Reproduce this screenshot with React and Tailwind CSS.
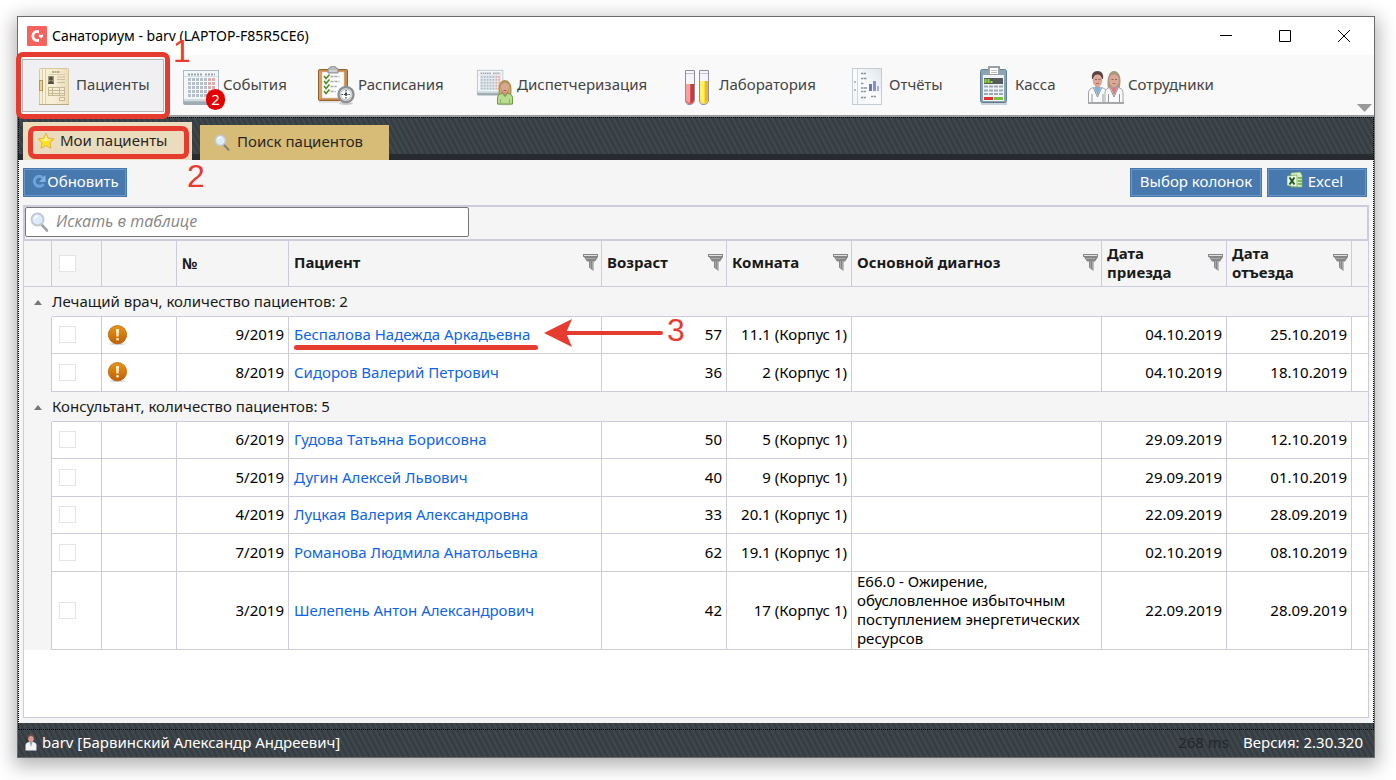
import React from "react";

const hatch =
  "bg-[repeating-linear-gradient(62deg,#363d42_0px,#363d42_1px,#434a4f_3px,#363d42_5px)]";

/* ---------- toolbar drawings ---------- */

function PatientsIcon() {
  return (
    <svg viewBox="0 0 40 40" className="size-10 shrink-0" aria-hidden="true">
      <defs>
        <linearGradient id="book" x1="0" x2="1">
          <stop offset="0" stopColor="#f8efcf" />
          <stop offset=".5" stopColor="#f7eed6" />
          <stop offset="1" stopColor="#eadcb6" />
        </linearGradient>
      </defs>
      <rect x="5.500" y="2.500" width="29" height="36" rx="1" fill="url(#book)" stroke="#d8c8a0" />
      <path d="M5 38.500h30" stroke="#bba982" />
      <path d="M8.500 3v35M11.500 3v35" stroke="#dccda6" />
      <path d="M10 3v35" stroke="#fffbe8" />
      <rect x="5.500" y="14.500" width="3" height="10" fill="#e9d29a" stroke="#b9974f" />
      <path d="M18 6h8" stroke="#b9ac8c" strokeWidth="2" strokeDasharray="2 .5" />
      <path d="M15 8.500h16" stroke="#d9cdae" />
      <rect x="14" y="10" width="6" height="8" fill="#a0967c" />
      <circle cx="17" cy="12.500" r="2" fill="#575042" />
      <path d="M14 18c0-4 6-4 6 0z" fill="#575042" />
      <path d="M23 11h8M23 13.500h8M23 16.500h8" stroke="#cbbf9f" />
      <rect x="14.500" y="21.500" width="16" height="8" fill="#f6ecd2" stroke="#c6b997" />
      <path d="M14 24.500h17M14 27.500h17M18.500 21v9M25.500 21v9" stroke="#c6b997" />
      <rect x="25.500" y="31.500" width="5" height="3" fill="#f6edd0" stroke="#c6b997" />
    </svg>
  );
}

function CalendarShape() {
  return (
    <g>
      <path d="M2 34h36v3q0 2-2 2H4q-2 0-2-2z" fill="#9fabb2" />
      <rect x="2.500" y="4.500" width="35" height="31" fill="#f4f7f9" stroke="#aebac2" />
      <path d="M3 33h34v2H3z" fill="#cfdbe2" />
      <path d="M3 10.500h34" stroke="#d5dee4" />
      <path d="M7 8.500h15M24 8.500h10" stroke="#98a3aa" strokeWidth="2" strokeDasharray="2 1" />
      <rect x="7" y="12" width="20" height="19" fill="#b4c0cb" />
      <rect x="27" y="12" width="7" height="19" fill="#dfabab" />
      <path
        d="M7 15.500h27M7 19.500h27M7 23.500h27M7 27.500h27M10.500 12v19M14.500 12v19M18.500 12v19M22.500 12v19M26.500 12v19M30.500 12v19"
        stroke="#f8fbfd"
      />
    </g>
  );
}

function EventsIcon() {
  return (
    <svg viewBox="0 0 40 40" className="size-10 shrink-0" aria-hidden="true">
      <CalendarShape />
    </svg>
  );
}

function ScheduleIcon() {
  return (
    <svg viewBox="0 0 40 40" className="size-10 shrink-0" aria-hidden="true">
      <rect x="3" y="34" width="29" height="3" fill="#e2e2e2" />
      <rect x="2.500" y="3.500" width="29" height="31" rx="1" fill="#c98a4b" stroke="#96602b" />
      <path d="M4 5v28" stroke="#e3b27c" />
      <path d="M6 6h22v20l-5 6H6z" fill="#fcfcfa" stroke="#d8cfc4" strokeWidth=".6" />
      <path d="M12 7V3q0-1 2-1 0-2 3-2t3 2q2 0 2 1v4z" fill="#b9bcbe" stroke="#8d9194" />
      <path d="M13 5h8" stroke="#e4e6e7" />
      <path
        d="M8 10l2 2.500 3.500-4M8 15l2 2.500 3.500-4M8 20l2 2.500 3.500-4M8 25l2 2.500 3.500-4"
        fill="none"
        stroke="#4a8a1c"
        strokeWidth="1.500"
      />
      <path d="M14.500 10.500h9M14.500 15.500h9M14.500 20.500h6M14.500 25.500h5" stroke="#a6a6a6" strokeWidth="1.500" strokeDasharray="3 1" />
      <ellipse cx="30" cy="37.500" rx="7" ry="1.500" fill="#c9c9c9" />
      <circle cx="30" cy="28.500" r="7.500" fill="#f1f3f4" stroke="#8b9095" strokeWidth="2.400" />
      <circle cx="30" cy="28.500" r="5.300" fill="#fff" stroke="#b4b9bd" />
      <path d="M30 24v9M25.500 28.500h9" stroke="#3d4246" strokeWidth="1.200" strokeDasharray="1.500 .8" />
      <path d="M30 27v2.500" stroke="#3d4246" strokeWidth="2" />
    </svg>
  );
}

function DispatchIcon() {
  return (
    <svg viewBox="0 0 40 40" className="size-10 shrink-0" aria-hidden="true">
      <g transform="translate(.5 1) scale(.73)">
        <CalendarShape />
      </g>
      <ellipse cx="30" cy="38" rx="8" ry="1.300" fill="#c4c9bd" />
      <path d="M24 31q-1-8 0-12 2-5 6-5t6 5q1 4 0 12z" fill="#b09257" />
      <path d="M26 28q-1-6 1-10M34 28q1-6-1-10" stroke="#d5bd85" fill="none" />
      <rect x="28" y="24" width="4" height="6" fill="#c98f7c" />
      <ellipse cx="30" cy="21.500" rx="3.600" ry="5" fill="#dba692" />
      <path d="M28.500 24.500h3" stroke="#a85a50" />
      <path d="M22.500 38v-6q0-4 5-4.500l2.500 3 2.500-3q5 .5 5 4.500v6z" fill="#b7de8e" stroke="#6f9c46" />
      <path d="M25.500 37v-4M34.500 37v-4" stroke="#8bb962" />
    </svg>
  );
}

function Tube({ x, top, dark, mid, light }) {
  return (
    <g>
      <path d={`M${x + 1} 5h8v29q0 4-4 4t-4-4z`} fill="#f5f5fb" />
      <path d={`M${x + 1} ${top}h8v${34 - top}q0 4-4 4t-4-4z`} fill={mid} />
      <path d={`M${x + 1} ${top}h4v${37 - top}q-4-1-4-4z`} fill={light} />
      <path d={`M${x + 6} ${top}h3v${34 - top}l-3 3z`} fill={dark} />
      <path d={`M${x + 0.5} 4.500h9v29.500q0 4-4.500 4.500t-4.500-4.500z`} fill="none" stroke="#8d8cab" />
      <path d={`M${x + 1} 7.500h8`} stroke="#c1c0d4" />
    </g>
  );
}

function LabIcon() {
  return (
    <svg viewBox="0 0 40 40" className="size-10 shrink-0" aria-hidden="true">
      <Tube x={8} top={18} dark="#c93b3b" mid="#e05252" light="#f3a3a0" />
      <Tube x={22} top={15} dark="#eeb91d" mid="#fbdc3a" light="#fff06a" />
    </svg>
  );
}

function ReportsIcon() {
  return (
    <svg viewBox="0 0 40 40" className="size-10 shrink-0" aria-hidden="true">
      <defs>
        <linearGradient id="page" x1="1" y1="0" x2="0" y2="1">
          <stop offset="0" stopColor="#dde5ea" />
          <stop offset=".5" stopColor="#fbfcfd" />
          <stop offset="1" stopColor="#f1f4f6" />
        </linearGradient>
      </defs>
      <rect x="5.500" y="2.500" width="29" height="36" fill="url(#page)" stroke="#c3cdd3" />
      <path d="M10.500 3v35" stroke="#cdd6db" />
      <path d="M7 16h2M7 24h2" stroke="#7b868d" />
      <path
        d="M14 7.500h5M14 12.500h6M14 17.500h3M14 22h4M18 22h2M14 25.500h5M14 31.500h5M24 30.500h5"
        stroke="#8c959b"
        strokeWidth="1.500"
        strokeDasharray="2.500 .5"
      />
      <path d="M22 18h3v7h-3z" fill="#6d77c4" />
      <path d="M26 15h3v10h-3z" fill="#8890d6" />
      <path d="M30 20h2v5h-2z" fill="#a9afe4" />
    </svg>
  );
}

function CashIcon() {
  return (
    <svg viewBox="0 0 40 40" className="size-10 shrink-0" aria-hidden="true">
      <rect x="8" y="36" width="26" height="3" fill="#c9d2d8" />
      <rect x="7.500" y="3.500" width="26" height="33" rx="2" fill="#8ba5b6" stroke="#5f7c90" />
      <path d="M10 9h21v26H10z" fill="#eef3f6" />
      <path d="M15 0h12v9H15z" fill="#9aa0a4" />
      <path d="M17 2h8v6h-8z" fill="#fff" />
      <path d="M18 4.500h6M18 6.500h6" stroke="#b8bcc0" />
      <rect x="11" y="12" width="19" height="6" fill="#565b5e" />
      <path d="M12.500 13v4M15.500 13v4M18.500 15v2" stroke="#95e032" strokeWidth="2" />
      <path d="M11 20.500h19M11 24.500h19M11 28h19" stroke="#9da8b0" strokeWidth="2" strokeDasharray="4 1" />
      <path d="M11 31h9v3h-9z" fill="#e03030" />
      <path d="M21 31h9v3h-9z" fill="#7cc23c" />
    </svg>
  );
}

function Doctor({ x, hair, shirt, woman }) {
  return (
    <g transform={`translate(${x} 0)`}>
      {woman && <path d="M3.500 23Q2 14 4.500 9 6 5 9.500 5T15 9q2 5 0 14z" fill="#a8987c" />}
      {!woman && <path d="M4 13Q3 5 9.500 5T15 13z" fill={hair} />}
      <path d="M7.500 18h4v6h-4z" fill="#c98d7d" />
      <ellipse cx="9.500" cy="14.500" rx="4.800" ry="6.500" fill="#dba897" />
      <path d="M4.500 12q0-6 5-6t5 6q-1-3.500-5-3.500T4.500 12z" fill={hair} />
      <path d="M7 13.500h2M10.500 13.500h2" stroke="#7d5248" strokeWidth=".8" />
      <path d="M8 17.500h3" stroke="#b06a60" />
      <path d="M.5 36.500V27q0-5 6-5.500h6q6 .5 6 5.500v9.500z" fill="#fafafa" stroke="#a3a6a8" />
      <path d="M6 21.500l3.500 8 3.500-8z" fill={shirt} />
      <path d="M5.500 22l4 9 4-9M4 36v-8M15 36v-8" fill="none" stroke="#909496" />
    </g>
  );
}

function StaffIcon() {
  return (
    <svg viewBox="0 0 40 40" className="size-10 shrink-0" aria-hidden="true">
      <path d="M2 36h36v2H2z" fill="#a9a9a9" />
      <Doctor x={2} hair="#5b4545" shirt="#7fb4d8" />
      <Doctor x={18.500} hair="#a8987c" shirt="#dc7c86" woman />
    </svg>
  );
}

/* ---------- small drawings ---------- */

function Magnifier({ className, tone = "#a5a5a8" }) {
  return (
    <svg viewBox="0 0 20 20" className={className} aria-hidden="true">
      <path d="M11.500 12.500l5.500 6" stroke={tone} strokeWidth="2.600" strokeLinecap="round" />
      <circle cx="7.500" cy="7.500" r="6" fill="#dcebfa" stroke="#c3c7cf" strokeWidth="1.800" />
      <path d="M4.500 7q.5-3 3.500-3" stroke="#fff" strokeWidth="1.500" fill="none" />
    </svg>
  );
}

function Star() {
  return (
    <svg viewBox="0 0 18 18" className="size-[18px]" aria-hidden="true">
      <path
        d="M9 1.200l2.400 5 5.600.7-4.100 3.900 1.200 5.500L9 13.700l-5.100 2.600 1.200-5.500L1 6.900l5.600-.7z"
        fill="#ffe11c"
        stroke="#e0b452"
        strokeLinejoin="round"
      />
      <path d="M9 3.500l1.500 3.600 3.600.5-3 1.400H7L3.900 7.600l3.600-.5z" fill="#fff3a0" />
    </svg>
  );
}

function Funnel() {
  return (
    <svg viewBox="0 0 16 18" className="h-[18px] w-4" aria-hidden="true">
      <path d="M0 0h15v3l-3 4.500h-1.500V17L6 13.500v-6H4L1 3H0z" fill="#868686" />
      <path d="M1 1.500h13" stroke="#e2e2e2" />
      <path d="M3 4.500h9" stroke="#a9a9a9" />
      <path d="M7.500 7v7M9.500 7v8.500" stroke="#b4b4b4" strokeWidth=".7" />
    </svg>
  );
}

function Warning() {
  return (
    <svg viewBox="0 0 20 20" className="block size-5" role="img" aria-label="Внимание">
      <defs>
        <linearGradient id="warn" x1="0" y1="0" x2="0" y2="1">
          <stop offset="0" stopColor="#e8960f" />
          <stop offset="1" stopColor="#bd5f0c" />
        </linearGradient>
      </defs>
      <ellipse cx="10.500" cy="19" rx="8" ry="1" fill="#d8d8d8" />
      <circle cx="10.500" cy="9.700" r="9.200" fill="url(#warn)" stroke="#b96a12" strokeWidth=".8" />
      <path d="M9 4h3l-.5 7.500h-2z" fill="#fff3dc" />
      <rect x="9.200" y="13" width="2.600" height="2.500" rx="1" fill="#fff3dc" />
    </svg>
  );
}

function Refresh() {
  return (
    <svg viewBox="0 0 16 16" className="size-4" aria-hidden="true">
      <path d="M12 4A5 5 0 1 0 12.500 10" fill="none" stroke="#6ea4dc" strokeWidth="3" />
      <path d="M14.500 1v7H8z" fill="#84b3e6" />
    </svg>
  );
}

function ExcelMark() {
  return (
    <svg viewBox="0 0 16 16" className="mb-1 size-4" aria-hidden="true">
      <path d="M4 1l9-1 2 3v12H4z" fill="#d9efc9" stroke="#7eb35c" strokeWidth=".7" />
      <path d="M11 5h4v2h-4zM11 8h4v2h-4zM11 11h4v2h-4z" fill="#7dbb58" />
      <path d="M0 4l10-1v12L0 13.500z" fill="#eef6e6" stroke="#69a04a" strokeWidth=".7" />
      <path d="M2.500 5.500l5 7M7.500 5.500l-5 7" stroke="#1f5a20" strokeWidth="2" />
    </svg>
  );
}

function UserMark() {
  return (
    <svg viewBox="0 0 12 17" className="h-[17px] w-3" aria-hidden="true">
      <path d="M.5 16.500v-5Q.5 8.500 4 8h4q3.500.5 3.500 3.500v5z" fill="#f3f3f3" />
      <path d="M4.500 8L6 13l1.500-5z" fill="#7ea8c8" />
      <ellipse cx="6" cy="4.500" rx="2.800" ry="4" fill="#d59c8d" />
      <path d="M3 4Q3 0 6 0t3 4Q8 2 6 2T3 4z" fill="#6b4a45" />
    </svg>
  );
}

/* ---------- data ---------- */

const tools = [
  { label: "Пациенты", Icon: PatientsIcon, width: "w-[142px]", selected: true },
  { label: "События", Icon: EventsIcon, width: "w-[130px]", badge: 2 },
  { label: "Расписания", Icon: ScheduleIcon, width: "w-[154px]" },
  { label: "Диспетчеризация", Icon: DispatchIcon, width: "w-[197px]" },
  { label: "Лаборатория", Icon: LabIcon, width: "w-[165px]" },
  { label: "Отчёты", Icon: ReportsIcon, width: "w-[121px]" },
  { label: "Касса", Icon: CashIcon, width: "w-[108px]" },
  { label: "Сотрудники", Icon: StaffIcon, width: "w-[156px]" },
];

const groups = [
  {
    title: "Лечащий врач, количество пациентов: 2",
    rows: [
      { no: "9/2019", name: "Беспалова Надежда Аркадьевна", age: 57, room: "11.1 (Корпус 1)", from: "04.10.2019", to: "25.10.2019", warn: true, marked: true },
      { no: "8/2019", name: "Сидоров Валерий Петрович", age: 36, room: "2 (Корпус 1)", from: "04.10.2019", to: "18.10.2019", warn: true },
    ],
  },
  {
    title: "Консультант, количество пациентов: 5",
    rows: [
      { no: "6/2019", name: "Гудова Татьяна Борисовна", age: 50, room: "5 (Корпус 1)", from: "29.09.2019", to: "12.10.2019" },
      { no: "5/2019", name: "Дугин Алексей Львович", age: 40, room: "9 (Корпус 1)", from: "29.09.2019", to: "01.10.2019" },
      { no: "4/2019", name: "Луцкая Валерия Александровна", age: 33, room: "20.1 (Корпус 1)", from: "22.09.2019", to: "28.09.2019" },
      { no: "7/2019", name: "Романова Людмила Анатольевна", age: 62, room: "19.1 (Корпус 1)", from: "02.10.2019", to: "08.10.2019" },
      {
        no: "3/2019",
        name: "Шелепень Антон Александрович",
        age: 42,
        room: "17 (Корпус 1)",
        diagnosis: "E66.0 - Ожирение, обусловленное избыточным поступлением энергетических ресурсов",
        from: "22.09.2019",
        to: "28.09.2019",
      },
    ],
  },
];

/* ---------- parts ---------- */

const cell = "border-b border-r border-[#ccccdd] px-1 pb-px";
const step = "pointer-events-none absolute font-['Liberation_Sans',sans-serif] text-[32px] leading-8 text-[#e63c30]";

function TitleBar() {
  return (
    <header className="flex h-[38px] items-center bg-white pl-[9px] pr-px">
      <svg viewBox="0 0 20 20" className="size-5" aria-hidden="true">
        <rect width="20" height="20" rx="1" fill="#f9615c" />
        <path d="M12 4.200A6 6 0 1 0 12 15.800V12.700A3.200 3.200 0 1 1 12 7.300z" fill="#fff" />
        <path d="M12.500 8.200l1.500 1 1.500-1q1.200.8.500 2.300l-2 2-2-2q-.7-1.500.5-2.300z" fill="#fff" />
      </svg>
      <h1 className="ml-[5px] flex-1 pb-[2px] text-[14px] text-black">Санаториум - barv (LAPTOP-F85R5CE6)</h1>
      <button aria-label="Свернуть" className="flex h-full w-[59px] items-center justify-center">
        <svg viewBox="0 0 12 12" className="size-3"><path d="M0 5.500h12" stroke="#000" /></svg>
      </button>
      <button aria-label="Развернуть" className="flex h-full w-[59px] items-center justify-center">
        <svg viewBox="0 0 12 12" className="size-3"><path d="M.5.5h11v11H.5z" fill="none" stroke="#000" /></svg>
      </button>
      <button aria-label="Закрыть" className="flex h-full w-[59px] items-center justify-center">
        <svg viewBox="0 0 12 12" className="size-3"><path d="M0 0l12 12M12 0L0 12" stroke="#000" /></svg>
      </button>
    </header>
  );
}

function Toolbar() {
  return (
    <nav className="flex h-[62px] items-start gap-[5px] border-b-2 border-[#9c9c9c] bg-[#f9f9f9] pl-1 pt-1">
      {tools.map(({ label, Icon, width, selected, badge }) => (
        <div key={label} className={`relative shrink-0 ${width}`}>
          <button
            className={`flex h-[53px] w-full items-center gap-[2px] whitespace-nowrap pl-[11px] text-[15px] text-[#444] ${
              selected ? "border border-[#b3b6b9] bg-[#f0f0f2]" : "border border-transparent"
            }`}
          >
            <Icon />
            <span className="pb-[2px]">{label}</span>
          </button>
          {badge && (
            <span className="absolute left-[37px] top-[30px] flex h-[21px] w-[19px] items-center justify-center rounded-full bg-[#e30000] text-[15px] leading-none text-white">
              {badge}
            </span>
          )}
          {selected && (
            <>
              <span className="pointer-events-none absolute -bottom-[7px] -left-[6px] -right-[6px] -top-[7px] rounded-[7px] border-[5px] border-[#e63c30]" />
              <span className={`${step} -top-6 left-[151px]`}>1</span>
            </>
          )}
        </div>
      ))}
      <button aria-label="Ещё" className="mb-[3px] ml-auto mr-[2px] self-end">
        <svg viewBox="0 0 15 8" className="h-2 w-[15px]"><path d="M0 0h15L7.500 8z" fill="#999" /></svg>
      </button>
    </nav>
  );
}

function Tabs() {
  return (
    <div
      role="tablist"
      className="flex h-[43px] items-end gap-2 bg-[linear-gradient(to_top,#272b2f_0px,#272b2f_6px,transparent_6px)] pl-[5px] text-[15px]"
    >
      <div className="relative">
        <button role="tab" aria-selected="true" className="flex h-[38px] w-[169px] items-center gap-[5px] bg-[#ebdcbd] pl-[14px] text-[#2b2720]">
          <Star />
          <span className="pb-[2px]">Мои пациенты</span>
        </button>
        <span className="pointer-events-none absolute bottom-[1px] left-[5px] right-[3px] top-[4px] rounded-[7px] border-[5px] border-[#e63c30]" />
        <span className={`${step} left-[164px] top-[38px] z-10`}>2</span>
      </div>
      <button role="tab" aria-selected="false" className="flex h-[35px] w-[189px] items-center gap-[6px] bg-[#d7bc78] pl-[14px] text-[#2b2720]">
        <Magnifier className="size-[17px]" tone="#86827a" />
        <span className="pb-[2px]">Поиск пациентов</span>
      </button>
    </div>
  );
}

const action =
  "flex h-[29px] items-center justify-center border border-[#4377ad] bg-[#4778ae] pb-[2px] text-[15px] text-white shadow-[inset_0_0_0_1px_#6b95c4]";

function FilterHead({ children }) {
  return (
    <th className={`${cell} h-[46px] pl-[5px] pr-[2px] text-left`}>
      <div className="flex items-center justify-between leading-[19px]">
        <span className="pb-px">{children}</span>
        <button aria-label="Фильтр"><Funnel /></button>
      </div>
    </th>
  );
}

function Check({ label }) {
  return (
    <input
      type="checkbox"
      aria-label={label}
      className="ml-[3px] block size-[17px] appearance-none border border-[#e4e4e6] bg-white"
    />
  );
}

function PatientTable() {
  return (
    <table className="w-full table-fixed border-separate border-spacing-0 text-[15px] text-black">
      <colgroup>
        <col className="w-[28px]" />
        <col className="w-[50px]" />
        <col className="w-[75px]" />
        <col className="w-[112px]" />
        <col className="w-[313px]" />
        <col className="w-[125px]" />
        <col className="w-[125px]" />
        <col className="w-[250px]" />
        <col className="w-[125px]" />
        <col className="w-[125px]" />
        <col />
      </colgroup>
      <thead className="bg-[#f5f5f5] text-[#1a1a1a]">
        <tr>
          <th className={cell} />
          <th className={cell}><Check label="Выбрать все" /></th>
          <th className={cell} />
          <th className={`${cell} pl-[5px] text-left`}>№</th>
          <FilterHead>Пациент</FilterHead>
          <FilterHead>Возраст</FilterHead>
          <FilterHead>Комната</FilterHead>
          <FilterHead>Основной диагноз</FilterHead>
          <FilterHead>Дата<br />приезда</FilterHead>
          <FilterHead>Дата<br />отъезда</FilterHead>
          <th className="border-b border-[#ccccdd]" />
        </tr>
      </thead>
      {groups.map((group) => (
        <tbody key={group.title}>
          <tr className="bg-[#f5f5f5] text-[#1a1a1a]">
            <td className="h-[30px]">
              <button aria-label="Свернуть группу" className="flex w-full justify-center">
                <svg viewBox="0 0 8 5" className="h-[5px] w-2"><path d="M0 5l4-5 4 5z" fill="#777" /></svg>
              </button>
            </td>
            <td colSpan={10} className="border-b border-[#ccccdd]">{group.title}</td>
          </tr>
          {group.rows.map((r) => (
            <tr key={r.no} className="odd:h-[38px] even:h-[37px]">
              <td className="border-r border-[#ccccdd] bg-[#f5f5f5]" />
              <td className={cell}><Check label={r.name} /></td>
              <td className={`${cell} pl-[5px]`}>{r.warn && <Warning />}</td>
              <td className={`${cell} text-right`}>{r.no}</td>
              <td className={`${cell} relative pl-[5px]`}>
                <a href="#patient" className="text-[#0f64e8]">{r.name}</a>
                {r.marked && (
                  <>
                    <span className="pointer-events-none absolute left-[5px] top-[28px] h-[5px] w-[244px] rounded-full bg-[#e63c30]" />
                    <svg viewBox="0 0 120 28" className="pointer-events-none absolute left-[255px] top-[2px] h-7 w-[120px]" aria-hidden="true">
                      <path d="M0 14L28 0l-6 14 6 14z" fill="#e63c30" />
                      <path d="M20 14h97" stroke="#e63c30" strokeWidth="4" strokeLinecap="round" />
                    </svg>
                    <span className={`${step} -top-[3px] left-[378px]`}>3</span>
                  </>
                )}
              </td>
              <td className={`${cell} text-right`}>{r.age}</td>
              <td className={`${cell} whitespace-nowrap text-right`}>{r.room}</td>
              <td className={`${cell} pl-[5px] leading-[19px]`}>{r.diagnosis}</td>
              <td className={`${cell} text-right`}>{r.from}</td>
              <td className={`${cell} text-right`}>{r.to}</td>
              <td className="border-b border-[#ccccdd]" />
            </tr>
          ))}
        </tbody>
      ))}
    </table>
  );
}

export default function App() {
  return (
    <div className="flex min-h-screen bg-white pb-[22px] pl-[17px] pr-[21px] pt-4 font-['Noto_Sans','Open_Sans',sans-serif]">
      <div className="flex min-w-0 flex-1 flex-col border border-[#6b6b6b] shadow-[0_5px_18px_3px_rgba(0,0,0,0.3)]">
        <TitleBar />
        <Toolbar />
        <div className={`flex flex-1 flex-col pb-[7px] outline-1 -outline-offset-1 outline-dotted outline-black ${hatch}`}>
          <Tabs />
          <main className="flex flex-1 flex-col bg-[#f5f5f5] px-[5px] pb-[5px] pt-2">
            <div className="flex gap-[5px] pr-[2px]">
              <button className={`${action} w-[104px]`}>
                <Refresh />
                Обновить
              </button>
              <span className="flex-1" />
              <button className={`${action} w-[132px]`}>Выбор колонок</button>
              <button className={`${action} w-[100px] gap-[5px] pr-1`}>
                <ExcelMark />
                Excel
              </button>
            </div>
            <section className="mt-2 flex flex-1 flex-col border-b border-[#ccccdd] bg-white">
              <div className="flex border-2 border-[#ccccdd] bg-[#f5f5f5] pb-[2px]">
                <label className="flex h-[30px] w-[444px] items-center gap-[6px] rounded-[2px] border border-[#777] bg-white pl-1">
                  <Magnifier className="size-5" />
                  <input
                    type="text"
                    aria-label="Искать в таблице"
                    placeholder="Искать в таблице"
                    className="min-w-0 flex-1 bg-transparent pb-[2px] font-['Open_Sans',sans-serif] text-[16px] italic outline-none placeholder:text-[#858585]"
                  />
                </label>
              </div>
              <div className="flex-1 border-x border-[#ccccdd]">
                <PatientTable />
              </div>
            </section>
          </main>
        </div>
        <footer className={`flex h-[27px] items-center pb-[2px] pl-[7px] pr-[11px] text-[15px] text-white ${hatch}`}>
          <UserMark />
          <span className="ml-[5px] flex-1">barv [Барвинский Александр Андреевич]</span>
          <span className="mr-[14px] text-[#22272b]">268 ms</span>
          <span>Версия: 2.30.320</span>
        </footer>
      </div>
    </div>
  );
}
